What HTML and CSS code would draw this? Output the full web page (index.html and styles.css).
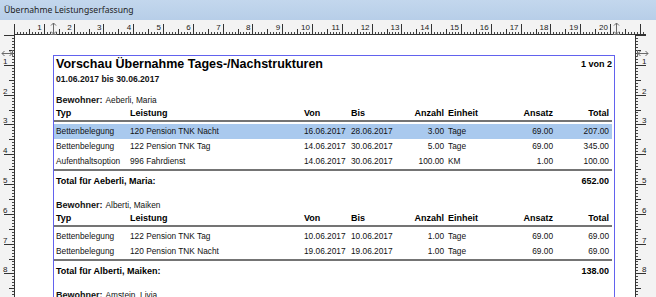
FILE: index.html
```html
<!DOCTYPE html>
<html lang="de">
  <head>
    <meta charset="UTF-8" />
    <title>Übernahme Leistungserfassung</title>
    <link rel="stylesheet" href="styles.css">
  </head>
  <body>
    <div class="window">
      <div class="titlebar">Übernahme Leistungserfassung</div>
      <div class="workspace">
        <div class="corner"></div>
        <div class="rulerTop">
          <div class="rulerLabels">
            <span>1</span><span>2</span><span>3</span><span>4</span><span>5</span>
            <span>6</span><span>7</span><span>8</span><span>9</span><span>10</span>
            <span>11</span><span>12</span><span>13</span><span>14</span><span>15</span>
            <span>16</span><span>17</span><span>18</span><span>19</span><span>20</span>
          </div>
          <svg class="marker markerTopLeft" width="7" height="13" viewBox="0 0 7 13">
            <path d="M3.5 1v11M1 3.5l2.5-2.5 2.5 2.5M1 9.5l2.5 2.5 2.5-2.5M0 12.5h7" />
          </svg>
          <svg class="marker markerTopRight" width="7" height="13" viewBox="0 0 7 13">
            <path d="M3.5 1v11M1 3.5l2.5-2.5 2.5 2.5M1 9.5l2.5 2.5 2.5-2.5M0 12.5h7" />
          </svg>
        </div>
        <div class="rulerLeft">
          <div class="rulerLabels">
            <span>1</span><span>2</span><span>3</span><span>4</span><span>5</span>
            <span>6</span><span>7</span><span>8</span>
          </div>
          <svg class="marker markerLeft" width="12" height="7" viewBox="0 0 12 7">
            <path d="M1 3.5h10M3.5 1l-2.5 2.5 2.5 2.5M8.5 1l2.5 2.5-2.5 2.5M11.5 0v7" />
          </svg>
        </div>
        <div class="paper">
          <div class="report">
            <div class="reportHead">
              <h1>Vorschau Übernahme Tages-/Nachstrukturen</h1>
              <span class="pageNo">1 von 2</span>
            </div>
            <div class="period">01.06.2017 bis 30.06.2017</div>

            <div class="resident"><b>Bewohner:</b><span>Aeberli, Maria</span></div>
            <div class="row thead">
              <span>Typ</span><span>Leistung</span><span>Von</span><span>Bis</span>
              <span class="num">Anzahl</span><span class="unit">Einheit</span>
              <span class="num">Ansatz</span><span class="num">Total</span>
            </div>
            <div class="rows">
              <div class="row selected">
                <span>Bettenbelegung</span><span>120 Pension TNK Nacht</span><span>16.06.2017</span><span>28.06.2017</span>
                <span class="num">3.00</span><span class="unit">Tage</span><span class="num">69.00</span><span class="num">207.00</span>
              </div>
              <div class="row">
                <span>Bettenbelegung</span><span>122 Pension TNK Tag</span><span>14.06.2017</span><span>30.06.2017</span>
                <span class="num">5.00</span><span class="unit">Tage</span><span class="num">69.00</span><span class="num">345.00</span>
              </div>
              <div class="row">
                <span>Aufenthaltsoption</span><span>996 Fahrdienst</span><span>14.06.2017</span><span>30.06.2017</span>
                <span class="num">100.00</span><span class="unit">KM</span><span class="num">1.00</span><span class="num">100.00</span>
              </div>
            </div>
            <div class="total"><span>Total für Aeberli, Maria:</span><span>652.00</span></div>

            <div class="resident"><b>Bewohner:</b><span>Alberti, Maiken</span></div>
            <div class="row thead">
              <span>Typ</span><span>Leistung</span><span>Von</span><span>Bis</span>
              <span class="num">Anzahl</span><span class="unit">Einheit</span>
              <span class="num">Ansatz</span><span class="num">Total</span>
            </div>
            <div class="rows">
              <div class="row">
                <span>Bettenbelegung</span><span>122 Pension TNK Tag</span><span>10.06.2017</span><span>10.06.2017</span>
                <span class="num">1.00</span><span class="unit">Tage</span><span class="num">69.00</span><span class="num">69.00</span>
              </div>
              <div class="row">
                <span>Bettenbelegung</span><span>120 Pension TNK Nacht</span><span>19.06.2017</span><span>19.06.2017</span>
                <span class="num">1.00</span><span class="unit">Tage</span><span class="num">69.00</span><span class="num">69.00</span>
              </div>
            </div>
            <div class="total"><span>Total für Alberti, Maiken:</span><span>138.00</span></div>

            <div class="resident"><b>Bewohner:</b><span>Amstein, Livia</span></div>
          </div>
        </div>
        <div class="rulerRight">
          <div class="rulerLabels">
            <span>1</span><span>2</span><span>3</span><span>4</span><span>5</span>
            <span>6</span><span>7</span><span>8</span>
          </div>
          <svg class="marker markerRight" width="12" height="7" viewBox="0 0 12 7">
            <path d="M1 3.5h10M3.5 1l-2.5 2.5 2.5 2.5M8.5 1l2.5 2.5-2.5 2.5M0.5 0v7" />
          </svg>
        </div>
      </div>
    </div>
  </body>
</html>
```

FILE: styles.css
```css
body {
  margin: 0;
  font-family: "Liberation Sans", Arial, sans-serif;
}
.window {
  width: 656px;
  height: 297px;
  overflow: hidden;
  display: flex;
  flex-direction: column;
  background-color: #f3f3f3;
}
.titlebar {
  flex: none;
  height: 20px;
  line-height: 20px;
  padding-left: 4px;
  background: linear-gradient(#c3d7ed, #b7cee8);
  font-family: "Noto Sans", sans-serif;
  font-size: 8.6px;
  color: #1e1e1e;
}
.workspace {
  flex: 1;
  min-height: 0;
  display: grid;
  grid-template-columns: 14px 621px 1fr;
  grid-template-rows: 15px 1fr;
  border-left: 2px solid #c9daee;
  margin-left: -2px;
}

/* rulers */
.rulerTop {
  grid-column: 2 / 4;
  margin-right: 10px;
  position: relative;
  border-bottom: 1px solid #333333;
  background:
    repeating-linear-gradient(90deg, #333 0 1px, transparent 1px 29.8px) left bottom / 100% 10px no-repeat,
    repeating-linear-gradient(90deg, #333 0 1px, transparent 1px 14.9px) left bottom / 100% 5px no-repeat,
    repeating-linear-gradient(90deg, #444 0 1px, transparent 1px 2.98px) left bottom / 100% 2px no-repeat;
}
.rulerTop > .rulerLabels {
  display: flex;
  padding-top: 3px;
}
.rulerTop > .rulerLabels > span {
  flex: 0 0 29.8px;
  text-align: right;
  padding-right: 2px;
  box-sizing: border-box;
  font-size: 8px;
  line-height: 9px;
  color: #222222;
}
.rulerLeft {
  position: relative;
  border-right: 1px solid #333333;
  margin-right: -1px;
  background:
    repeating-linear-gradient(180deg, #333 0 1px, transparent 1px 29.8px) right top / 10px 100% no-repeat,
    repeating-linear-gradient(180deg, #333 0 1px, transparent 1px 14.9px) right top / 5px 100% no-repeat,
    repeating-linear-gradient(180deg, #444 0 1px, transparent 1px 2.98px) right top / 2px 100% no-repeat;
}
.rulerRight {
  position: relative;
  border-left: 1px solid #333333;
  background:
    repeating-linear-gradient(180deg, #333 0 1px, transparent 1px 29.8px) left top / 10px 100% no-repeat,
    repeating-linear-gradient(180deg, #333 0 1px, transparent 1px 14.9px) left top / 5px 100% no-repeat,
    repeating-linear-gradient(180deg, #444 0 1px, transparent 1px 2.98px) left top / 2px 100% no-repeat;
}
.rulerLeft > .rulerLabels,
.rulerRight > .rulerLabels {
  display: flex;
  flex-direction: column;
  padding-top: 1px;
}
.rulerLeft > .rulerLabels > span,
.rulerRight > .rulerLabels > span {
  flex: 0 0 29.8px;
  display: flex;
  align-items: flex-end;
  font-size: 8px;
  line-height: 9px;
  color: #222222;
}
.rulerLeft > .rulerLabels > span {
  padding-left: 3px;
}
.rulerRight > .rulerLabels > span {
  padding-left: 6px;
}
.marker {
  position: absolute;
  fill: none;
  stroke: #6a6a6a;
  stroke-width: 1;
}
.markerTopLeft {
  left: 36px;
  top: 2px;
}
.markerTopRight {
  left: 599px;
  top: 2px;
}
.markerLeft {
  left: 1px;
  top: 15px;
}
.markerRight {
  left: 1px;
  top: 15px;
}

/* paper + report */
.paper {
  background-color: #ffffff;
  padding: 20px 20px 0 39px;
  overflow: hidden;
}
.report {
  height: 100%;
  border: 1px solid #6262ee;
  border-bottom: none;
  padding-right: 2px;
  color: #111111;
}
.reportHead {
  display: flex;
  justify-content: space-between;
  align-items: center;
  height: 16px;
  padding-left: 2px;
}
.reportHead > h1 {
  margin: 0;
  font-size: 12.5px;
  font-weight: bold;
  color: #000000;
}
.pageNo {
  font-size: 9px;
  font-weight: bold;
  color: #000000;
}
.period {
  height: 14px;
  line-height: 14px;
  padding-left: 2px;
  font-size: 8.6px;
  font-weight: bold;
  margin-bottom: 7px;
}
.resident {
  height: 14px;
  line-height: 14px;
  padding-left: 2px;
  font-size: 9px;
}
.resident > span {
  margin-left: 3px;
  font-size: 8.3px;
}
.row {
  display: grid;
  grid-template-columns: 74px 174px 47px 49px 44px 56px 53px 56px;
  height: 15px;
  line-height: 15px;
  padding: 0 3px 0 2px;
  font-size: 8.3px;
  white-space: nowrap;
}
.row > .num {
  text-align: right;
}
.row > .unit {
  padding-left: 4px;
}
.row.thead {
  height: 13px;
  line-height: 13px;
  font-size: 9px;
  font-weight: bold;
  color: #000000;
  border-bottom: 2px solid #747474;
  margin-bottom: 2px;
}
.row.selected {
  background-color: #a9c9ee;
}
.rows {
  border-bottom: 2px solid #747474;
}
.total {
  display: flex;
  justify-content: space-between;
  height: 21px;
  line-height: 21px;
  padding: 0 3px 0 2px;
  font-size: 9px;
  font-weight: bold;
  color: #000000;
  margin-bottom: 6px;
}
```
